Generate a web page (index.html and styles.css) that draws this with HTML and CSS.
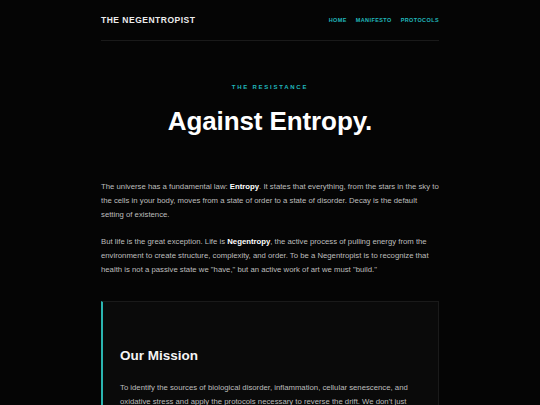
FILE: index.html
```html
<!DOCTYPE html>
<html lang="en">
<head>
<meta charset="utf-8">
<title>The Negentropist</title>
<link rel="stylesheet" href="styles.css">
</head>
<body>
<div class="page">
  <header class="site-header">
    <div class="brand">THE NEGENTROPIST</div>
    <nav class="nav">
      <a href="#" class="nav-link">HOME</a>
      <a href="#" class="nav-link">MANIFESTO</a>
      <a href="#" class="nav-link">PROTOCOLS</a>
    </nav>
  </header>

  <section class="hero">
    <div class="eyebrow">THE RESISTANCE</div>
    <h1 class="hero-title">Against Entropy.</h1>
  </section>

  <section class="intro">
    <p>The universe has a fundamental law: <strong>Entropy</strong>. It states that everything, from the stars in the sky to the cells in your body, moves from a state of order to a state of disorder. Decay is the default setting of existence.</p>
    <p>But life is the great exception. Life is <strong>Negentropy</strong>, the active process of pulling energy from the environment to create structure, complexity, and order. To be a Negentropist is to recognize that health is not a passive state we "have," but an active work of art we must "build."</p>
  </section>

  <section class="card">
    <h2 class="card-title">Our Mission</h2>
    <p>To identify the sources of biological disorder, inflammation, cellular senescence, and oxidative stress and apply the protocols necessary to reverse the drift. We don't just accept the slow decline; we engineer against it with intention, measurement and discipline.</p>
  </section>
</div>
</body>
</html>
```

FILE: styles.css
```css
html, body {
  margin: 0;
  padding: 0;
  background: #050505;
}

body {
  font-family: "Liberation Sans", Arial, sans-serif;
  color: #bdbdbd;
}

.page {
  width: 338px;
  margin: 0 auto;
}

.site-header {
  display: flex;
  justify-content: space-between;
  align-items: center;
  padding: 15px 0 15px;
  border-bottom: 1px solid #1a1a1a;
}

.brand {
  font-size: 8.5px;
  line-height: 10px;
  font-weight: 700;
  letter-spacing: 0.5px;
  color: #ececec;
}

.nav {
  display: flex;
  gap: 9px;
}

.nav-link {
  font-size: 5.5px;
  line-height: 10px;
  font-weight: 700;
  letter-spacing: 0.4px;
  color: #20b8bc;
  text-decoration: none;
}

.hero {
  padding-top: 42px;
  text-align: center;
}

.eyebrow {
  font-size: 6px;
  line-height: 8px;
  font-weight: 700;
  letter-spacing: 1.75px;
  color: #20b8bc;
}

.hero-title {
  margin: 15px 0 0;
  font-size: 26px;
  line-height: 1.2;
  font-weight: 700;
  letter-spacing: -0.1px;
  color: #ffffff;
}

.intro {
  padding-top: 43px;
}

.intro p,
.card p {
  margin: 0 0 13px;
  font-size: 7.75px;
  line-height: 14px;
  color: #bdbdbd;
}

.intro strong {
  color: #ffffff;
}

.card {
  margin-top: 24px;
  background: #0a0a0a;
  border: 1px solid #1a1a1a;
  border-left: 2px solid #2bb5b0;
  padding: 22px 17px 20px;
}

.card-title {
  margin: 24px 0 17px;
  font-size: 13.5px;
  line-height: 1.2;
  font-weight: 700;
  color: #f5f5f5;
}
```
